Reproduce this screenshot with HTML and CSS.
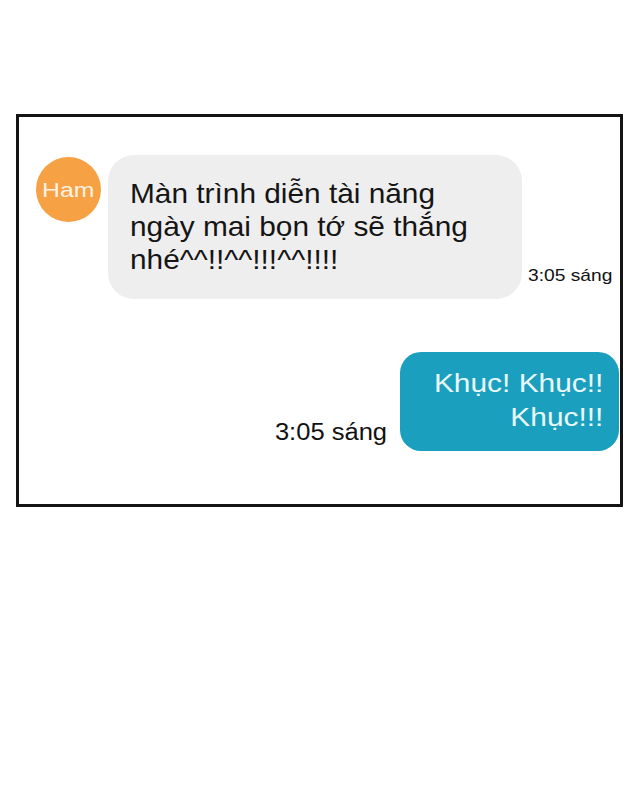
FILE: index.html
```html
<!DOCTYPE html>
<html lang="vi">
<head>
<meta charset="utf-8">
<link rel="stylesheet" href="styles.css">
</head>
<body>
<div class="frame">
  <div class="row row-in">
    <div class="avatar"><span class="avatar-name">Ham</span></div>
    <div class="bubble bubble-in"><span class="wide wide-left">Màn trình diễn tài năng<br>ngày mai bọn tớ sẽ thắng<br>nhé^^!!^^!!!^^!!!!</span></div>
    <div class="time time-in"><span class="wide wide-left">3:05 sáng</span></div>
  </div>
  <div class="row row-out">
    <div class="time time-out"><span class="wide wide-right">3:05 sáng</span></div>
    <div class="bubble bubble-out"><span class="wide wide-right">Khục! Khục!!<br>Khục!!!</span></div>
  </div>
</div>
</body>
</html>
```

FILE: styles.css
```css
html, body {
  margin: 0;
  padding: 0;
  background: #ffffff;
}
body {
  font-family: "Liberation Sans", Arial, sans-serif;
  color: #111111;
}
.frame {
  margin: 114px 0 0 16px;
  width: 607px;
  height: 393px;
  box-sizing: border-box;
  border: 3px solid #141414;
  display: flex;
  flex-direction: column;
}
.row {
  display: flex;
}
.wide {
  display: inline-block;
}
.wide-left {
  transform-origin: left center;
}
.wide-right {
  transform-origin: right center;
}
.row-in {
  margin-top: 38px;
  padding-left: 17px;
  align-items: flex-start;
}
.avatar {
  width: 65px;
  height: 65px;
  margin-top: 2px;
  border-radius: 50%;
  background: #f5a144;
  color: #fdf3e6;
  font-size: 21px;
  display: flex;
  align-items: center;
  justify-content: center;
  flex-shrink: 0;
}
.avatar-name {
  display: inline-block;
  transform: scaleX(1.18);
}
.bubble {
  box-sizing: border-box;
  flex-shrink: 0;
}
.bubble-in {
  margin-left: 7px;
  width: 414px;
  height: 144px;
  border-radius: 26px;
  background: #efeeee;
  padding: 22px 0 0 22px;
  font-size: 28px;
  line-height: 33px;
  color: #151515;
}
.bubble-in .wide {
  transform: scaleX(1.065);
}
.time {
  white-space: nowrap;
  color: #111111;
}
.time-in {
  align-self: flex-end;
  margin: 0 0 13px 6px;
  font-size: 17px;
}
.time-in .wide {
  transform: scaleX(1.13);
}
.row-out {
  margin-top: 53px;
  justify-content: flex-end;
  padding-right: 1px;
  align-items: flex-end;
}
.time-out {
  margin: 0 13px 5px 0;
  font-size: 23px;
}
.time-out .wide {
  transform: scaleX(1.11);
}
.bubble-out {
  width: 219px;
  height: 99px;
  border-radius: 21px;
  background: #1a9fbf;
  color: #e9f8f8;
  text-align: right;
  padding: 14px 16px 0 0;
  font-size: 26px;
  line-height: 34px;
}
.bubble-out .wide {
  transform: scaleX(1.15);
}
```
